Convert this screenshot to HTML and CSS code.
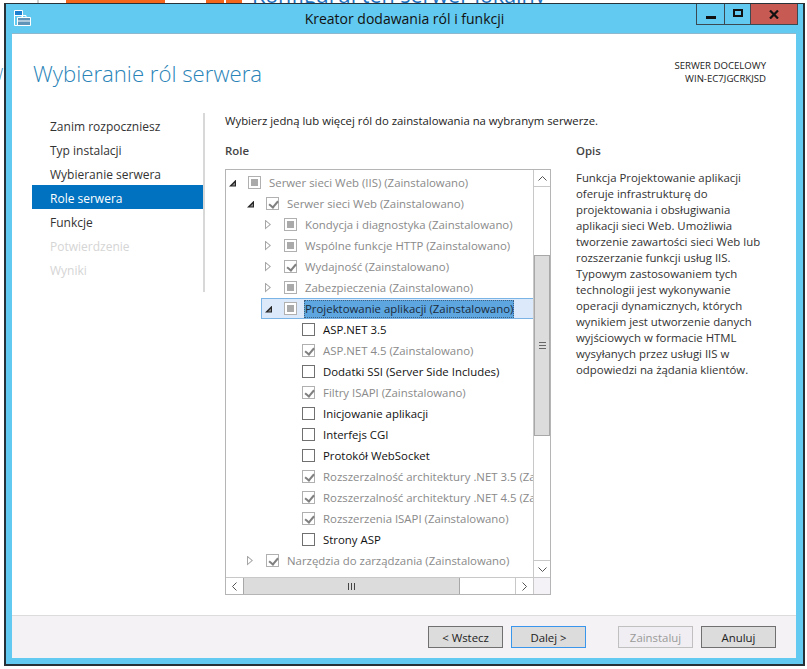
FILE: index.html
```html
<!DOCTYPE html>
<html lang="pl">
<head>
<meta charset="utf-8">
<title>Kreator dodawania ról i funkcji</title>
<link rel="stylesheet" href="styles.css">
</head>
<body>
<div class="desktop">
  <div class="behind">
    <span class="vline"></span>
    <span class="orange o1"></span><span class="orange o2"></span><span class="orange o3"></span>
    <span class="behind-text">Konfiguruj ten serwer lokalny</span>
  </div>
  <span class="edge-glyph">W</span>
  <div class="window">
    <div class="titlebar">
      <svg class="appicon" width="17" height="16" viewBox="0 0 17 16">
        <path d="M.5.5h8v15h-8z" fill="#62c9f0" stroke="#fff"/>
        <path d="M1 1h7v4H1z" fill="#1c7fd0"/>
        <path d="M1 5.500h7" stroke="#fff"/>
        <path d="M3.500 7.500h13v8h-13z" fill="#5f93b8" stroke="#fff"/>
        <path d="M8 7.500V5.500h4v2M4 11h12" fill="none" stroke="#fff"/>
      </svg>
      <div class="title">Kreator dodawania ról i funkcji</div>
      <div class="controls">
        <div class="ctl ctl-min"><span class="min-glyph"></span></div>
        <div class="ctl ctl-max"><span class="max-glyph"></span></div>
        <div class="ctl ctl-close"><svg width="10" height="9" viewBox="0 0 10 9"><path d="M1 .5l8 8M9 .5l-8 8" stroke="#111" stroke-width="2.2" fill="none"/></svg></div>
      </div>
    </div>
    <div class="client">
      <div class="header">
        <h1 class="heading">Wybieranie ról serwera</h1>
        <div class="target">SERWER DOCELOWY<br>WIN-EC7JGCRKJSD</div>
      </div>
      <div class="main">
        <nav class="steps">
          <div class="step">Zanim rozpoczniesz</div>
          <div class="step">Typ instalacji</div>
          <div class="step">Wybieranie serwera</div>
          <div class="step active">Role serwera</div>
          <div class="step">Funkcje</div>
          <div class="step off">Potwierdzenie</div>
          <div class="step off">Wyniki</div>
        </nav>
        <div class="content">
          <p class="lead">Wybierz jedną lub więcej ról do zainstalowania na wybranym serwerze.</p>
          <div class="columns">
            <div class="rolecol">
              <div class="label">Role</div>
              <div class="treebox">
                <div class="tree-view">
                  <div class="tree">
                    <div class="row l0 dim"><i class="arrow open"></i><i class="cb ind"></i><span>Serwer sieci Web (IIS) (Zainstalowano)</span></div>
                    <div class="row l1 dim"><i class="arrow open"></i><i class="cb chk"></i><span>Serwer sieci Web (Zainstalowano)</span></div>
                    <div class="row l2 dim"><i class="arrow"></i><i class="cb ind"></i><span>Kondycja i diagnostyka (Zainstalowano)</span></div>
                    <div class="row l2 dim"><i class="arrow"></i><i class="cb ind"></i><span>Wspólne funkcje HTTP (Zainstalowano)</span></div>
                    <div class="row l2 dim"><i class="arrow"></i><i class="cb chk"></i><span>Wydajność (Zainstalowano)</span></div>
                    <div class="row l2 dim"><i class="arrow"></i><i class="cb ind"></i><span>Zabezpieczenia (Zainstalowano)</span></div>
                    <div class="row l2 sel"><i class="arrow open"></i><i class="cb ind"></i><span class="hl">Projektowanie aplikacji (Zainstalowano)</span></div>
                    <div class="row l3"><i class="cb"></i><span>ASP.NET 3.5</span></div>
                    <div class="row l3 dim"><i class="cb chk"></i><span>ASP.NET 4.5 (Zainstalowano)</span></div>
                    <div class="row l3"><i class="cb"></i><span>Dodatki SSI (Server Side Includes)</span></div>
                    <div class="row l3 dim"><i class="cb chk"></i><span>Filtry ISAPI (Zainstalowano)</span></div>
                    <div class="row l3"><i class="cb"></i><span>Inicjowanie aplikacji</span></div>
                    <div class="row l3"><i class="cb"></i><span>Interfejs CGI</span></div>
                    <div class="row l3"><i class="cb"></i><span>Protokół WebSocket</span></div>
                    <div class="row l3 dim"><i class="cb chk"></i><span>Rozszerzalność architektury .NET 3.5 (Zainstalowano)</span></div>
                    <div class="row l3 dim"><i class="cb chk"></i><span>Rozszerzalność architektury .NET 4.5 (Zainstalowano)</span></div>
                    <div class="row l3 dim"><i class="cb chk"></i><span>Rozszerzenia ISAPI (Zainstalowano)</span></div>
                    <div class="row l3"><i class="cb"></i><span>Strony ASP</span></div>
                    <div class="row l1 dim"><i class="arrow"></i><i class="cb chk"></i><span>Narzędzia do zarządzania (Zainstalowano)</span></div>
                  </div>
                  <div class="vscroll">
                    <div class="sbtn"><svg width="9" height="5" viewBox="0 0 9 5"><path d="M.5 4.500l4-4 4 4" fill="none" stroke="#555"/></svg></div>
                    <div class="vtrack">
                      <div class="vthumb"><span class="grip-h"></span></div>
                    </div>
                    <div class="sbtn"><svg width="9" height="5" viewBox="0 0 9 5"><path d="M.5.500l4 4 4-4" fill="none" stroke="#555"/></svg></div>
                  </div>
                </div>
                <div class="hscroll">
                  <div class="hbtn"><svg width="5" height="9" viewBox="0 0 5 9"><path d="M4.500 .5l-4 4 4 4" fill="none" stroke="#555"/></svg></div>
                  <div class="htrack"><div class="hthumb"><span class="grip-v"></span></div></div>
                  <div class="hbtn"><svg width="5" height="9" viewBox="0 0 5 9"><path d="M.5 .5l4 4-4 4" fill="none" stroke="#555"/></svg></div>
                  <div class="corner"></div>
                </div>
              </div>
            </div>
            <div class="desc">
              <div class="label">Opis</div>
              <p class="desc-text">Funkcja Projektowanie aplikacji oferuje infrastrukturę do projektowania i obsługiwania aplikacji sieci Web. Umożliwia tworzenie zawartości sieci Web lub rozszerzanie funkcji usług IIS. Typowym zastosowaniem tych technologii jest wykonywanie operacji dynamicznych, których wynikiem jest utworzenie danych wyjściowych w formacie HTML wysyłanych przez usługi IIS w odpowiedzi na żądania klientów.</p>
            </div>
          </div>
        </div>
      </div>
      <div class="footer">
        <button class="btn">&lt; Wstecz</button>
        <button class="btn default">Dalej &gt;</button>
        <button class="btn disabled install">Zainstaluj</button>
        <button class="btn">Anuluj</button>
      </div>
    </div>
  </div>
</div>
</body>
</html>
```
FILE: styles.css
```css
* { box-sizing: border-box; }
html, body { margin: 0; padding: 0; background: #fff; }
body { width: 807px; height: 669px; overflow: hidden; font-family: "Open Sans", "Noto Sans", sans-serif; font-size: 11.4px; color: #222; }
.desktop { display: flex; flex-direction: column; height: 669px; position: relative; overflow: hidden; }
.behind { height: 3px; display: flex; overflow: hidden; flex: none; }
.vline { display: block; width: 2px; height: 3px; margin-left: 37px; background: #d0d0d0; }
.orange { display: block; height: 3px; background: #f4661b; }
.o1 { margin-left: 27px; width: 99px; }
.o2 { margin-left: 41px; width: 18px; }
.o3 { margin-left: 2px; width: 16px; }
.behind-text { margin-left: 10px; margin-top: -19px; font-size: 21.500px; color: #1b6fc0; line-height: 28px; white-space: nowrap; }
.edge-glyph { position: absolute; left: -11px; top: 64px; font-size: 16px; line-height: 20px; font-weight: 300; color: #2a84b8; }
.window { position: relative; margin-left: 4px; width: 801px; height: 663px; border: solid #263238; border-width: 1px 2px 2px 2px; background: #62c9f0; padding: 0 7px 6px 6px; display: flex; flex-direction: column; flex: none; }
.titlebar { height: 29px; display: flex; position: relative; flex: none; margin-left: -6px; margin-right: -7px; padding-left: 8px; }
.appicon { margin-top: 6px; }
.title { position: absolute; left: 0; right: 0; top: 6px; text-align: center; font-size: 14px; line-height: 18px; color: #111; }
.controls { position: absolute; right: 5px; top: 0; display: flex; height: 21px; border: solid #3b4a52; border-width: 0 1px 1px 1px; }
.ctl { display: flex; align-items: center; justify-content: center; height: 20px; }
.ctl-min { width: 28px; border-right: 1px solid #3b4a52; }
.ctl-max { width: 26px; border-right: 1px solid #3b4a52; }
.ctl-close { width: 46px; background: #c75a52; }
.min-glyph { width: 10px; height: 3px; background: #111; margin-top: 7px; }
.max-glyph { width: 10px; height: 8px; border: 2px solid #111; margin-top: -2px; }
.client { flex: 1; background: #fff; border-top: 1px solid #8fb8cc; display: flex; flex-direction: column; min-height: 0; }
.header { height: 68px; display: flex; justify-content: space-between; flex: none; padding: 0 30px 0 21px; }
.heading { margin: 25px 0 0; font-size: 22.200px; line-height: 30px; font-weight: 300; color: #2a84b8; }
.target { margin-top: 25px; text-align: right; font-size: 9.600px; line-height: 13px; color: #222; }
.main { flex: 1; display: flex; min-height: 0; }
.steps { width: 193px; margin-top: 11px; border-right: 2px solid #d8d8d8; height: 179px; padding: 0 0 0 20px; flex: none; }
.step { height: 24px; line-height: 22px; padding: 3px 0 0 18px; color: #333; font-size: 12px; }
.step.active { background: #0072c0; color: #fff; }
.step.off { color: #d5d5d5; }
.content { flex: 1; padding: 11px 0 0 20px; min-width: 0; }
.lead { margin: 0; line-height: 16px; height: 16px; font-size: 11.340px; }
.columns { display: flex; margin-top: 14px; }
.label { font-weight: 600; font-size: 11.400px; line-height: 16px; color: #444; }
.rolecol { width: 326px; flex: none; }
.treebox { margin-top: 10px; width: 326px; height: 426px; border: 1px solid #b5b5b5; display: flex; flex-direction: column; }
.tree-view { flex: 1; display: flex; min-height: 0; }
.tree { width: 307px; padding-top: 2px; overflow: hidden; flex: none; }
.row { height: 21px; display: flex; align-items: center; white-space: nowrap; color: #111; }
.dim { color: #8a8a8a; }
.l0 { padding-left: 3px; }
.l1 { padding-left: 21px; }
.l2 { padding-left: 39px; }
.l3 { padding-left: 76px; }
.arrow { display: block; width: 7px; height: 10px; margin-right: 12px; flex: none; position: relative; }
.arrow::before { content: ""; position: absolute; left: 0; top: 0; width: 6px; height: 10px; background: #a6a6a6; clip-path: polygon(0 0, 100% 50%, 0 100%); }
.arrow::after { content: ""; position: absolute; left: 1px; top: 2px; width: 3.500px; height: 6px; background: #fff; clip-path: polygon(0 0, 100% 50%, 0 100%); }
.arrow.open::before { width: 7px; height: 7px; top: 2px; background: #262626; clip-path: polygon(100% 0, 100% 100%, 0 100%); }
.arrow.open::after { left: 3px; top: 5px; width: 3px; height: 3px; background: #8c8c8c; clip-path: polygon(100% 0, 100% 100%, 0 100%); }
.cb { display: block; width: 13px; height: 13px; border: 1px solid #707070; background: #fff; margin-right: 8px; flex: none; position: relative; }
.dim .cb, .sel .cb { border-color: #b0b0b0; }
.cb.ind::after { content: ""; position: absolute; left: 2px; top: 2px; width: 7px; height: 7px; background: #aaa; }
.cb.chk::after { content: ""; position: absolute; left: 2px; top: 1px; width: 7px; height: 4px; border: solid #808080; border-width: 0 0 2px 2px; transform: rotate(-50deg) translate(-1px, 1px); }
.sel { background: #dbe9fb; border: 1px solid #7ab3e6; border-right: none; margin-left: 35px; padding-left: 3px; color: #222; }
.hl { background: #5ea6e0; color: #1a2a3a; height: 18px; line-height: 18px; outline: 1px dotted #3d5f80; outline-offset: -1px; padding: 0 1px; margin-left: -1px; }
.vscroll { width: 17px; border-left: 1px solid #c8c8c8; display: flex; flex-direction: column; flex: none; }
.sbtn { height: 17px; flex: none; display: flex; align-items: center; justify-content: center; background: #fff; border-bottom: 1px solid #c8c8c8; }
.sbtn:last-child { border-bottom: none; border-top: 1px solid #c8c8c8; }
.vtrack { flex: 1; padding-top: 68px; }
.vthumb { height: 181px; background: #dcdcdc; border: 1px solid #a8a8a8; display: flex; align-items: center; justify-content: center; }
.grip-h { width: 7px; height: 7px; background: repeating-linear-gradient(#666 0 1px, transparent 1px 3px); }
.hscroll { height: 17px; display: flex; border-top: 1px solid #c8c8c8; flex: none; }
.hbtn { width: 17px; display: flex; align-items: center; justify-content: center; flex: none; background: #fff; }
.htrack { flex: 1; background: #fff; min-width: 0; border-right: 1px solid #c8c8c8; }
.hthumb { width: 217px; height: 100%; background: #dcdcdc; border: solid #a8a8a8; border-width: 0 1px; display: flex; align-items: center; justify-content: center; }
.grip-v { width: 7px; height: 7px; background: repeating-linear-gradient(90deg, #444 0 1px, transparent 1px 3px); }
.corner { width: 17px; background: #f4f2f6; flex: none; border-left: 1px solid #c8c8c8; }
.desc { margin-left: 25px; width: 205px; flex: none; }
.desc-text { margin: 11px 0 0; line-height: 16px; color: #333; width: 190px; }
.footer { height: 43px; flex: none; background: #f5f2f6; border-top: 1px solid #dcdcdc; display: flex; align-items: flex-start; padding: 10px 0 0 416px; }
.btn { width: 75px; height: 22px; font: inherit; padding: 0; background: #dcdcdc; border: 1px solid #707070; color: #222; margin-right: 8px; }
.btn.default { border-color: #3a96ea; }
.btn.disabled { background: #f0eef2; border-color: #c0c0c0; color: #9a9a9a; }
.btn.install { margin-left: 24px; }
```
